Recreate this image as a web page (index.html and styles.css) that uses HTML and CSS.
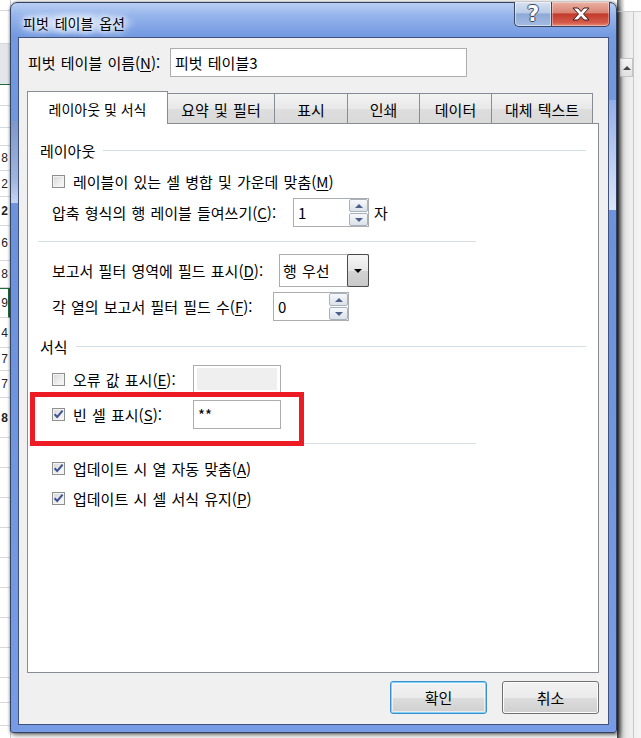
FILE: index.html
```html
<!DOCTYPE html>
<html lang="ko">
<head>
<meta charset="utf-8">
<title>피벗 테이블 옵션</title>
<link rel="stylesheet" href="styles.css">
</head>
<body>
<div class="desk">
  <div class="sheet-left">
    <div class="srow" style="height:11px"></div>
    <div class="srow" style="height:33px"></div>
    <div class="srow sel" style="height:41px"></div>
    <div class="srow" style="height:21px"></div>
    <div class="srow" style="height:22px"></div>
    <div class="srow" style="height:18px"></div>
    <div class="srow" style="height:25px"><span>8</span></div>
    <div class="srow" style="height:26px"><span>2</span></div>
    <div class="srow" style="height:29px"><b>2</b></div>
    <div class="srow" style="height:35px"><span>6</span></div>
    <div class="srow" style="height:27px"><span>8</span></div>
    <div class="srow green" style="height:30px"><span>9</span></div>
    <div class="srow" style="height:30px"><span>4</span></div>
    <div class="srow" style="height:23px"><span>7</span></div>
    <div class="srow" style="height:27px"><span>7</span></div>
    <div class="srow" style="height:40px"><b>8</b></div>
    <div class="srow" style="height:30px"></div>
    <div class="srow" style="height:30px"></div>
    <div class="srow" style="height:30px"></div>
    <div class="srow" style="height:30px"></div>
    <div class="srow" style="height:30px"></div>
    <div class="srow" style="height:30px"></div>
    <div class="srow" style="height:30px"></div>
    <div class="srow" style="height:30px"></div>
    <div class="srow" style="height:25px"></div>
    <div class="srow" style="height:23px"></div>
    <div class="srow" style="height:30px"></div>
  </div>

  <div class="sheet-right">
    <div class="sr-top"></div>
    <div class="sr-body">
      <div class="sr-up"><i></i></div>
      <div class="sr-track"></div>
    </div>
  </div>

  <div class="window">
    <div class="titlebar">
      <div class="title">피벗 테이블 옵션</div>
      <div class="caption">
        <div class="capbtn help"><span>?</span></div>
        <div class="capbtn close">
          <svg width="22" height="14" viewBox="0 0 22 14"><path d="M3 1 H8 L11 4.5 L14 1 H19 L13.5 7 L19 13 H14 L11 9.5 L8 13 H3 L8.5 7 Z" fill="#fff" stroke="#3b1a16" stroke-width="1" stroke-linejoin="round"/></svg>
        </div>
      </div>
    </div>

    <div class="client">
      <div class="name-row">
        <span class="lbl name-lbl">피벗 테이블 이름(<u>N</u>):</span>
        <div class="input name-input">피벗 테이블3</div>
      </div>

      <div class="tabs">
        <div class="tab active w-layout">레이아웃 및 서식</div>
        <div class="tab w-sum">요약 및 필터</div>
        <div class="tab w-show">표시</div>
        <div class="tab w-print">인쇄</div>
        <div class="tab w-data">데이터</div>
        <div class="tab w-alt">대체 텍스트</div>
      </div>

      <div class="panel">
        <div class="group-head first"><span>레이아웃</span><div class="hline"></div></div>

        <div class="row cb-row r1">
          <span class="cb"></span>
          <span class="lbl">레이블이 있는 셀 병합 및 가운데 맞춤(<u>M</u>)</span>
        </div>

        <div class="row ctl-row r-indent">
          <span class="lbl lw-indent">압축 형식의 행 레이블 들여쓰기(<u>C</u>):</span>
          <div class="spin">
            <span class="val">1</span>
            <div class="spin-btns">
              <div class="sbtn"><i class="up"></i></div>
              <div class="sbtn"><i class="down"></i></div>
            </div>
          </div>
          <span class="lbl unit">자</span>
        </div>

        <div class="sep s1"></div>

        <div class="row ctl-row r-combo">
          <span class="lbl lw-area">보고서 필터 영역에 필드 표시(<u>D</u>):</span>
          <div class="combo">
            <span class="val">행 우선</span>
            <div class="combo-btn"><i></i></div>
          </div>
        </div>

        <div class="row ctl-row r-count">
          <span class="lbl lw-count">각 열의 보고서 필터 필드 수(<u>F</u>):</span>
          <div class="spin">
            <span class="val">0</span>
            <div class="spin-btns">
              <div class="sbtn"><i class="up"></i></div>
              <div class="sbtn"><i class="down"></i></div>
            </div>
          </div>
        </div>

        <div class="group-head second"><span>서식</span><div class="hline"></div></div>

        <div class="row ctl-row r-err">
          <div class="cb-lbl lw-fmt">
            <span class="cb"></span>
            <span class="lbl">오류 값 표시(<u>E</u>):</span>
          </div>
          <div class="field disabled"><div class="fill"></div></div>
        </div>

        <div class="row ctl-row r-empty">
          <div class="cb-lbl lw-fmt">
            <span class="cb checked"><svg width="11" height="11" viewBox="0 0 11 11"><path d="M1.6 5.2 L4.2 8 L9.6 1.6" fill="none" stroke="#3d5394" stroke-width="2"/></svg></span>
            <span class="lbl">빈 셀 표시(<u>S</u>):</span>
          </div>
          <div class="field"><span class="val">**</span></div>
        </div>

        <div class="sep s2"></div>

        <div class="row cb-row r-auto">
          <span class="cb checked"><svg width="11" height="11" viewBox="0 0 11 11"><path d="M1.6 5.2 L4.2 8 L9.6 1.6" fill="none" stroke="#3d5394" stroke-width="2"/></svg></span>
          <span class="lbl">업데이트 시 열 자동 맞춤(<u>A</u>)</span>
        </div>

        <div class="row cb-row r-keep">
          <span class="cb checked"><svg width="11" height="11" viewBox="0 0 11 11"><path d="M1.6 5.2 L4.2 8 L9.6 1.6" fill="none" stroke="#3d5394" stroke-width="2"/></svg></span>
          <span class="lbl">업데이트 시 셀 서식 유지(<u>P</u>)</span>
        </div>

        <div class="redbox"></div>
      </div>

      <div class="btn-row">
        <button class="btn default">확인</button>
        <button class="btn">취소</button>
      </div>
    </div>
  </div>
</div>
</body>
</html>
```

FILE: styles.css
```css
* { box-sizing: border-box; }
html, body { margin: 0; padding: 0; }
body {
  width: 641px; height: 738px; overflow: hidden;
  font-family: "Noto Sans CJK KR", "Noto Sans", sans-serif;
  font-size: 15px; color: #000; background: #fff;
  word-spacing: 1px;
}
u { text-decoration-thickness: 1px; text-underline-offset: 2px; }

.desk { position: relative; width: 641px; height: 738px; overflow: hidden; background: #fff; }

/* spreadsheet behind the dialog */
.sheet-left { position: absolute; left: 0; top: 0; width: 11px; height: 738px; background: #fff; border-right: 1px solid #c9cdd3; }
.srow { border-bottom: 1px solid #d5d8dd; overflow: hidden; display: flex; align-items: center; justify-content: flex-end; padding-right: 2px; font-family: "Liberation Sans", sans-serif; font-size: 12px; color: #222; }
.srow.sel { background: #e2e5ea; border-bottom: 1px solid #1f6e3a; }
.srow.green { border-right: 2px solid #1f6e3a; border-top: 1px solid #1f6e3a; padding-right: 0; }
.srow span, .srow b { flex: none; }

.sheet-right { position: absolute; left: 617px; top: 0; width: 24px; height: 738px;
  background: linear-gradient(90deg, #3d3d3d 0, #8c8c8c 3px, #cfcfcf 6px, #e6e6e6 9px, #efefef 14px, #f4f4f4 100%); }
.sr-top { height: 12px; background: linear-gradient(90deg, #555 0, #bbb 4px, #fff 8px); border-bottom: 1px solid #cfcfcf; }
.sr-body { display: flex; flex-direction: column; padding-top: 46px; padding-left: 3px; width: 17px; height: 726px; border-right: 1px solid #c8c8c8; }
.sr-up { height: 19px; border: 1px solid #c4c4c4; border-left: none; background: linear-gradient(180deg, #f6f6f6, #e2e2e2); display: flex; align-items: center; padding-left: 3px; }
.sr-up i { width: 0; height: 0; border-left: 4px solid transparent; border-right: 4px solid transparent; border-bottom: 4px solid #444; }
.sr-track { flex: 1; }

/* window */
.window {
  position: absolute; left: 10px; top: 2px; width: 607px; height: 731px;
  border: 1px solid #33405e; border-radius: 7px 7px 3px 3px;
  background: linear-gradient(180deg, #b9cff2 0, #97b5ec 12px, #7399e0 33px, #6c92dd 240px, #789be5 100%);
  box-shadow: 2px 2px 5px rgba(0,0,0,.55), 0 0 3px rgba(0,0,0,.4);
  padding: 0 7px 7px 7px;
  display: flex; flex-direction: column;
}
.window::after {
  content: ""; position: absolute; right: 0; top: 97px; width: 7px; height: 110px;
  background: linear-gradient(180deg, #93aee8 0, #b9cbf0 50%, #dbe5f6 100%);
}
.window::before {
  content: ""; position: absolute; left: 0; top: 118px; width: 7px; height: 82px;
  background: linear-gradient(180deg, #7f98c9 0, #9fb4dd 70%, #c7d5ee 100%);
}
.titlebar { height: 34px; position: relative; display: flex; align-items: center; padding: 5px 0 0 5px; }
.title {
  font-size: 14px; word-spacing: 2px; padding: 2px 10px 2px 0;
  text-shadow: 0 0 6px #fff, 0 0 10px #fff, 0 0 14px rgba(255,255,255,.9);
  background: radial-gradient(ellipse at 45% 50%, rgba(230,240,255,.85) 0, rgba(200,220,250,.4) 55%, rgba(200,220,250,0) 75%);
}
.caption { position: absolute; right: -1px; top: -1px; display: flex; height: 25px; }
.capbtn { height: 25px; border: 1px solid #3a4763; border-top: none; display: flex; align-items: center; justify-content: center; }
.capbtn.help {
  width: 37px; border-radius: 0 0 0 5px; border-right: none;
  background: linear-gradient(180deg, #d7e2f2 0, #b9cbe6 45%, #8ea9d6 50%, #a3bce4 100%);
  box-shadow: inset 0 0 0 1px rgba(255,255,255,.5);
}
.capbtn.help span { font-family: "DejaVu Sans", sans-serif; font-weight: bold; font-size: 21px; color: #fff; line-height: 1;
  text-shadow: -1px 0 #3d4660, 1px 0 #3d4660, 0 -1px #3d4660, 0 1px #3d4660; }
.capbtn.close {
  width: 59px; border-radius: 0 0 5px 0;
  background: linear-gradient(180deg, #eab1a4 0, #d98474 45%, #c13a2c 50%, #d45a49 85%, #e68c78 100%);
  box-shadow: inset 0 0 0 1px rgba(255,255,255,.35);
}

.client {
  flex: 1; background: #f0f0f0; border: 1px solid #40527c;
  padding: 10px 9px 10px 8px;
  display: flex; flex-direction: column; position: relative; z-index: 1;
}

.name-row { display: flex; align-items: center; height: 29px; padding-left: 1px; }
.name-lbl { width: 142px; white-space: nowrap; }
.input { border: 1px solid #abadb3; background: #fff; height: 29px; display: flex; align-items: center; padding-left: 4px; }
.name-input { width: 297px; }

/* tabs */
.tabs { display: flex; align-items: flex-end; height: 32px; margin-top: 14px; position: relative; z-index: 2; }
.tab {
  height: 30px; border: 1px solid #898c95; border-bottom: none; margin-left: -1px;
  background: linear-gradient(180deg, #f3f3f3 0, #e8e8e8 50%, #dedede 51%, #d9d9d9 100%);
  display: flex; align-items: center; justify-content: center; padding-top: 1px; white-space: nowrap;
}
.tab.active { height: 33px; margin-left: 0; margin-bottom: -1px; background: #fff; padding-top: 2px; font-size: 14px; word-spacing: 0; }
.w-layout { width: 141px; }
.w-sum { width: 108px; }
.w-show { width: 74px; }
.w-print { width: 73px; }
.w-data { width: 73px; }
.w-alt { width: 102px; }

.panel { height: 550px; border: 1px solid #898c95; background: #fff; position: relative; }

.group-head { display: flex; align-items: center; height: 20px; padding-left: 12px; padding-right: 12px; }
.group-head.first { margin-top: 16px; }
.group-head.second { margin-top: 15px; }
.hline { flex: 1; height: 1px; background: #d5dfe5; margin-left: 8px; }

.lbl { white-space: nowrap; }
.row { display: flex; align-items: center; padding-left: 24px; }
.cb-row { height: 20px; }
.r1 { margin-top: 11px; }
.r-auto { margin-top: 14px; }
.r-keep { margin-top: 10px; }
.cb-row .cb { margin-right: 8px; }

.ctl-row { height: 29px; }
.r-indent { margin-top: 7px; }
.r-combo { margin-top: 12px; height: 33px; }
.r-count { margin-top: 5px; }
.r-err { margin-top: 9px; height: 28px; }
.r-empty { margin-top: 7px; }

.lw-indent { width: 241px; }
.lw-area { width: 227px; }
.lw-count { width: 221px; }
.lw-fmt { width: 141px; }
.unit { margin-left: 5px; }

.cb-lbl { display: flex; align-items: center; }
.cb-lbl .cb { margin-right: 8px; }

.sep { height: 1px; background: #d5dfe5; margin-left: 10px; width: 438px; }
.s1 { margin-top: 14px; }
.s2 { margin-top: 14px; }

.cb {
  width: 13px; height: 13px; flex: none;
  border: 1px solid #8e8f8f;
  background: linear-gradient(135deg, #d6d6d6 0, #ececec 55%, #fbfbfb 100%);
  box-shadow: inset 0 0 0 1px #f3f3f3;
  display: flex; align-items: center; justify-content: center;
}
.cb svg { display: block; }

.spin { width: 76px; height: 29px; border: 1px solid #abadb3; background: #fff; display: flex; align-items: center; justify-content: space-between; padding: 0 0 0 4px; }
.spin-btns { display: flex; flex-direction: column; gap: 1px; }
.sbtn { width: 19px; height: 13px; border: 1px solid #a9b1bc; border-radius: 2px; background: linear-gradient(180deg, #f7f9fb 0, #e9edf2 50%, #dce2ea 100%); display: flex; align-items: center; justify-content: center; }
.sbtn i { width: 0; height: 0; border-left: 4px solid transparent; border-right: 4px solid transparent; }
.sbtn i.up { border-bottom: 4px solid #4c5f87; }
.sbtn i.down { border-top: 4px solid #4c5f87; }

.combo { width: 90px; height: 33px; border: 1px solid #abadb3; background: #fff; display: flex; align-items: center; justify-content: space-between; padding-left: 3px; }
.combo-btn { align-self: stretch; margin: -1px -1px -1px 0; width: 22px; border: 1px solid #4a4a4a; border-radius: 2px;
  background: linear-gradient(180deg, #f6f6f6 0, #e6e6e6 50%, #d3d3d3 51%, #c9c9c9 100%);
  display: flex; align-items: center; justify-content: center; }
.combo-btn i { width: 0; height: 0; border-left: 4px solid transparent; border-right: 4px solid transparent; border-top: 4px solid #000; }

.field { width: 88px; height: 29px; border: 1px solid #abadb3; background: #fff; display: flex; align-items: center; padding-left: 4px; }
.field.disabled { height: 28px; padding: 2px 3px; align-items: stretch; }
.field .fill { flex: 1; background: #efefef; }

.redbox { position: absolute; left: 2px; top: 268px; width: 274px; height: 54px; border: 5px solid #ed1c24; }

.btn-row { display: flex; justify-content: flex-end; gap: 15px; margin-top: 8px; }
.btn {
  width: 97px; height: 33px; border: 1px solid #707070; border-radius: 3px;
  background: linear-gradient(180deg, #f2f2f2 0, #ebebeb 50%, #dddddd 51%, #cfcfcf 100%);
  box-shadow: inset 0 0 0 1px #fcfcfc;
  font-family: inherit; font-size: 15px; color: #000; padding: 0; word-spacing: 1px;
}
.btn.default { border-color: #3c8fcf; box-shadow: inset 0 0 0 1px #7fd3f7, inset 0 0 0 2px rgba(255,255,255,.6); }
```
